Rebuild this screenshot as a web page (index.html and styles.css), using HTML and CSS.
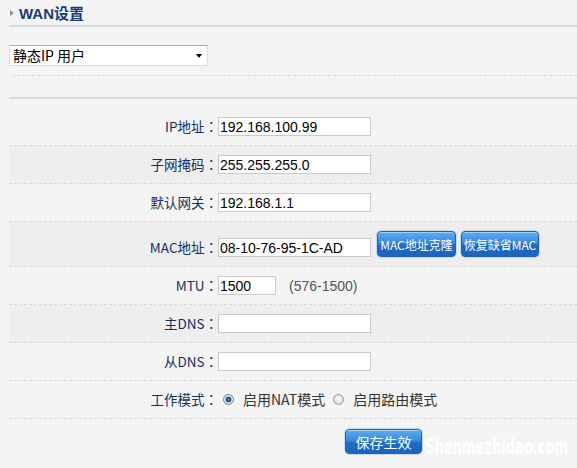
FILE: index.html
```html
<!DOCTYPE html>
<html lang="zh-CN">
<head>
<meta charset="utf-8">
<title>WAN设置</title>
<link rel="stylesheet" href="styles.css">
</head>
<body>
<div class="page">
  <div class="title"><span class="tri"></span><h1>WAN设置</h1></div>
  <div class="conn">
    <div class="select"><span>静态IP 用户</span><span class="caret"></span></div>
    <div class="dash"></div>
    <div class="rule"></div>
  </div>
  <div class="form">
    <div class="row"><label>IP地址<span class="colon" lang="ja">：</span></label><div class="field"><input class="ip" type="text" value="192.168.100.99"></div></div>
    <div class="row alt"><label>子网掩码<span class="colon" lang="ja">：</span></label><div class="field"><input class="ip" type="text" value="255.255.255.0"></div></div>
    <div class="row"><label>默认网关<span class="colon" lang="ja">：</span></label><div class="field"><input class="ip" type="text" value="192.168.1.1"></div></div>
    <div class="row alt bottom"><label>MAC地址<span class="colon" lang="ja">：</span></label><div class="field"><input class="ip" type="text" value="08-10-76-95-1C-AD"><button class="btn mac1" type="button">MAC地址克隆</button><button class="btn mac2" type="button">恢复缺省MAC</button></div></div>
    <div class="row"><label>MTU<span class="colon" lang="ja">：</span></label><div class="field"><input class="mtu" type="text" value="1500"><span class="hint">(576-1500)</span></div></div>
    <div class="row alt"><label>主DNS<span class="colon" lang="ja">：</span></label><div class="field"><input class="ip" type="text" value=""></div></div>
    <div class="row"><label>从DNS<span class="colon" lang="ja">：</span></label><div class="field"><input class="ip" type="text" value=""></div></div>
    <div class="row"><label>工作模式<span class="colon" lang="ja">：</span></label><div class="field radios"><span class="radio on"></span><span class="rtext">启用NAT模式</span><span class="radio"></span><span class="rtext">启用路由模式</span></div></div>
  </div>
  <div class="actions"><button class="btn save" type="button">保存生效</button></div>
  <div class="watermark">Shenmezhidao.com</div>
</div>
</body>
</html>
```
FILE: styles.css
```css
html, body {
  margin: 0;
  padding: 0;
  background: #f4f4f4;
  font-family: "Noto Sans CJK SC", "Liberation Sans", sans-serif;
}

.page {
  position: relative;
  padding-left: 9px;
  height: 468px;
  overflow: hidden;
}

.title {
  height: 25px;
  display: flex;
  align-items: center;
  border-bottom: 2px solid #d3dbdf;
}

.tri {
  width: 0;
  height: 0;
  border-left: 4px solid #8794a1;
  border-top: 3.5px solid transparent;
  border-bottom: 3.5px solid transparent;
  margin-left: 1px;
  margin-right: 5px;
}

.title h1 {
  margin: 0;
  font: bold 15px "Liberation Sans", "Noto Sans CJK SC", sans-serif;
  color: #173e7c;
}

.conn {
  padding-top: 18px;
}

.select {
  width: 199px;
  height: 21px;
  box-sizing: border-box;
  border: 1px solid #d4dce1;
  border-top-color: #a9a9a9;
  background: #fff;
  display: flex;
  align-items: center;
  justify-content: space-between;
  padding: 0 5px 0 3px;
  font-size: 14px;
  line-height: 19px;
  color: #000;
}

.caret {
  width: 0;
  height: 0;
  border-top: 4px solid #000;
  border-left: 3.5px solid transparent;
  border-right: 3.5px solid transparent;
}

.dash {
  margin: 9px 0 0 3px;
  border-top: 1px dashed #dadada;
}

.rule {
  height: 21px;
  border-bottom: 2px solid #d3dbdf;
}

.form {
  padding-top: 9px;
}

.row {
  display: grid;
  grid-template-columns: 209px 1fr;
  align-items: center;
  padding: 9px 0;
  min-height: 19px;
  border-bottom: 1px dashed #d9d9d9;
}

.row.alt {
  background: #eeeeee;
}

.row.bottom {
  align-items: end;
}

.row label {
  text-align: right;
  font-size: 13.5px;
  line-height: 19px;
  color: #15305e;
  white-space: nowrap;
}

.colon {
  font-family: "Noto Sans CJK JP", "Noto Sans CJK TC", sans-serif;
}

.field {
  display: flex;
  align-items: center;
}

.row.bottom .field {
  align-items: flex-end;
}

input {
  height: 19px;
  box-sizing: border-box;
  margin: 0;
  padding: 0 1px;
  border: 1px solid #c9c9c9;
  background: #fff;
  font: 14px "Liberation Sans", sans-serif;
  color: #000;
  outline: none;
}

input.ip {
  width: 153px;
}

input.mtu {
  width: 58px;
}

.hint {
  margin-left: 13px;
  font: 14px "Liberation Sans", sans-serif;
  color: #555;
}

.btn {
  height: 26px;
  box-sizing: border-box;
  margin: 0;
  padding: 0;
  border: 1px solid #2462ad;
  border-radius: 4px;
  background: linear-gradient(#5eacef 0%, #3a8ae0 45%, #1f6bc8 55%, #1c64be 100%);
  box-shadow: inset 0 1px 0 rgba(255, 255, 255, 0.45), 0 0 0 1px rgba(120, 170, 230, 0.35);
  color: #fff;
  font: 12px "Noto Sans CJK SC", sans-serif;
  white-space: nowrap;
  cursor: pointer;
}

.btn.mac1 {
  width: 79px;
  margin-left: 6px;
}

.btn.mac2 {
  width: 78px;
  margin-left: 5px;
}

.radios {
  padding-left: 5px;
}

.radio {
  width: 11px;
  height: 11px;
  box-sizing: border-box;
  border-radius: 50%;
  border: 1px solid #9b9b9b;
  background: radial-gradient(circle at 50% 45%, #ffffff 0, #f2f2f2 2px, #d6d6d6 5px);
  flex: none;
}

.radio.on {
  background: radial-gradient(circle at 50% 50%, #4a8fd0 0, #15467f 2.4px, #c9d2da 3.2px, #f4f4f4 5px);
  border-color: #7d7d7d;
}

.rtext {
  margin-left: 9px;
  margin-right: 8px;
  font-size: 14px;
  line-height: 19px;
  color: #333;
}

.actions {
  margin-top: 10px;
  padding-left: 336px;
  display: flex;
}

.btn.save {
  width: 77px;
  height: 25px;
  font-size: 14px;
}

.watermark {
  position: absolute;
  left: 425px;
  top: 435px;
  font: bold 22px "DejaVu Sans", sans-serif;
  font-stretch: condensed;
  line-height: 24px;
  color: #ffffff;
  transform: scaleX(0.66);
  transform-origin: left top;
  white-space: nowrap;
}
```
